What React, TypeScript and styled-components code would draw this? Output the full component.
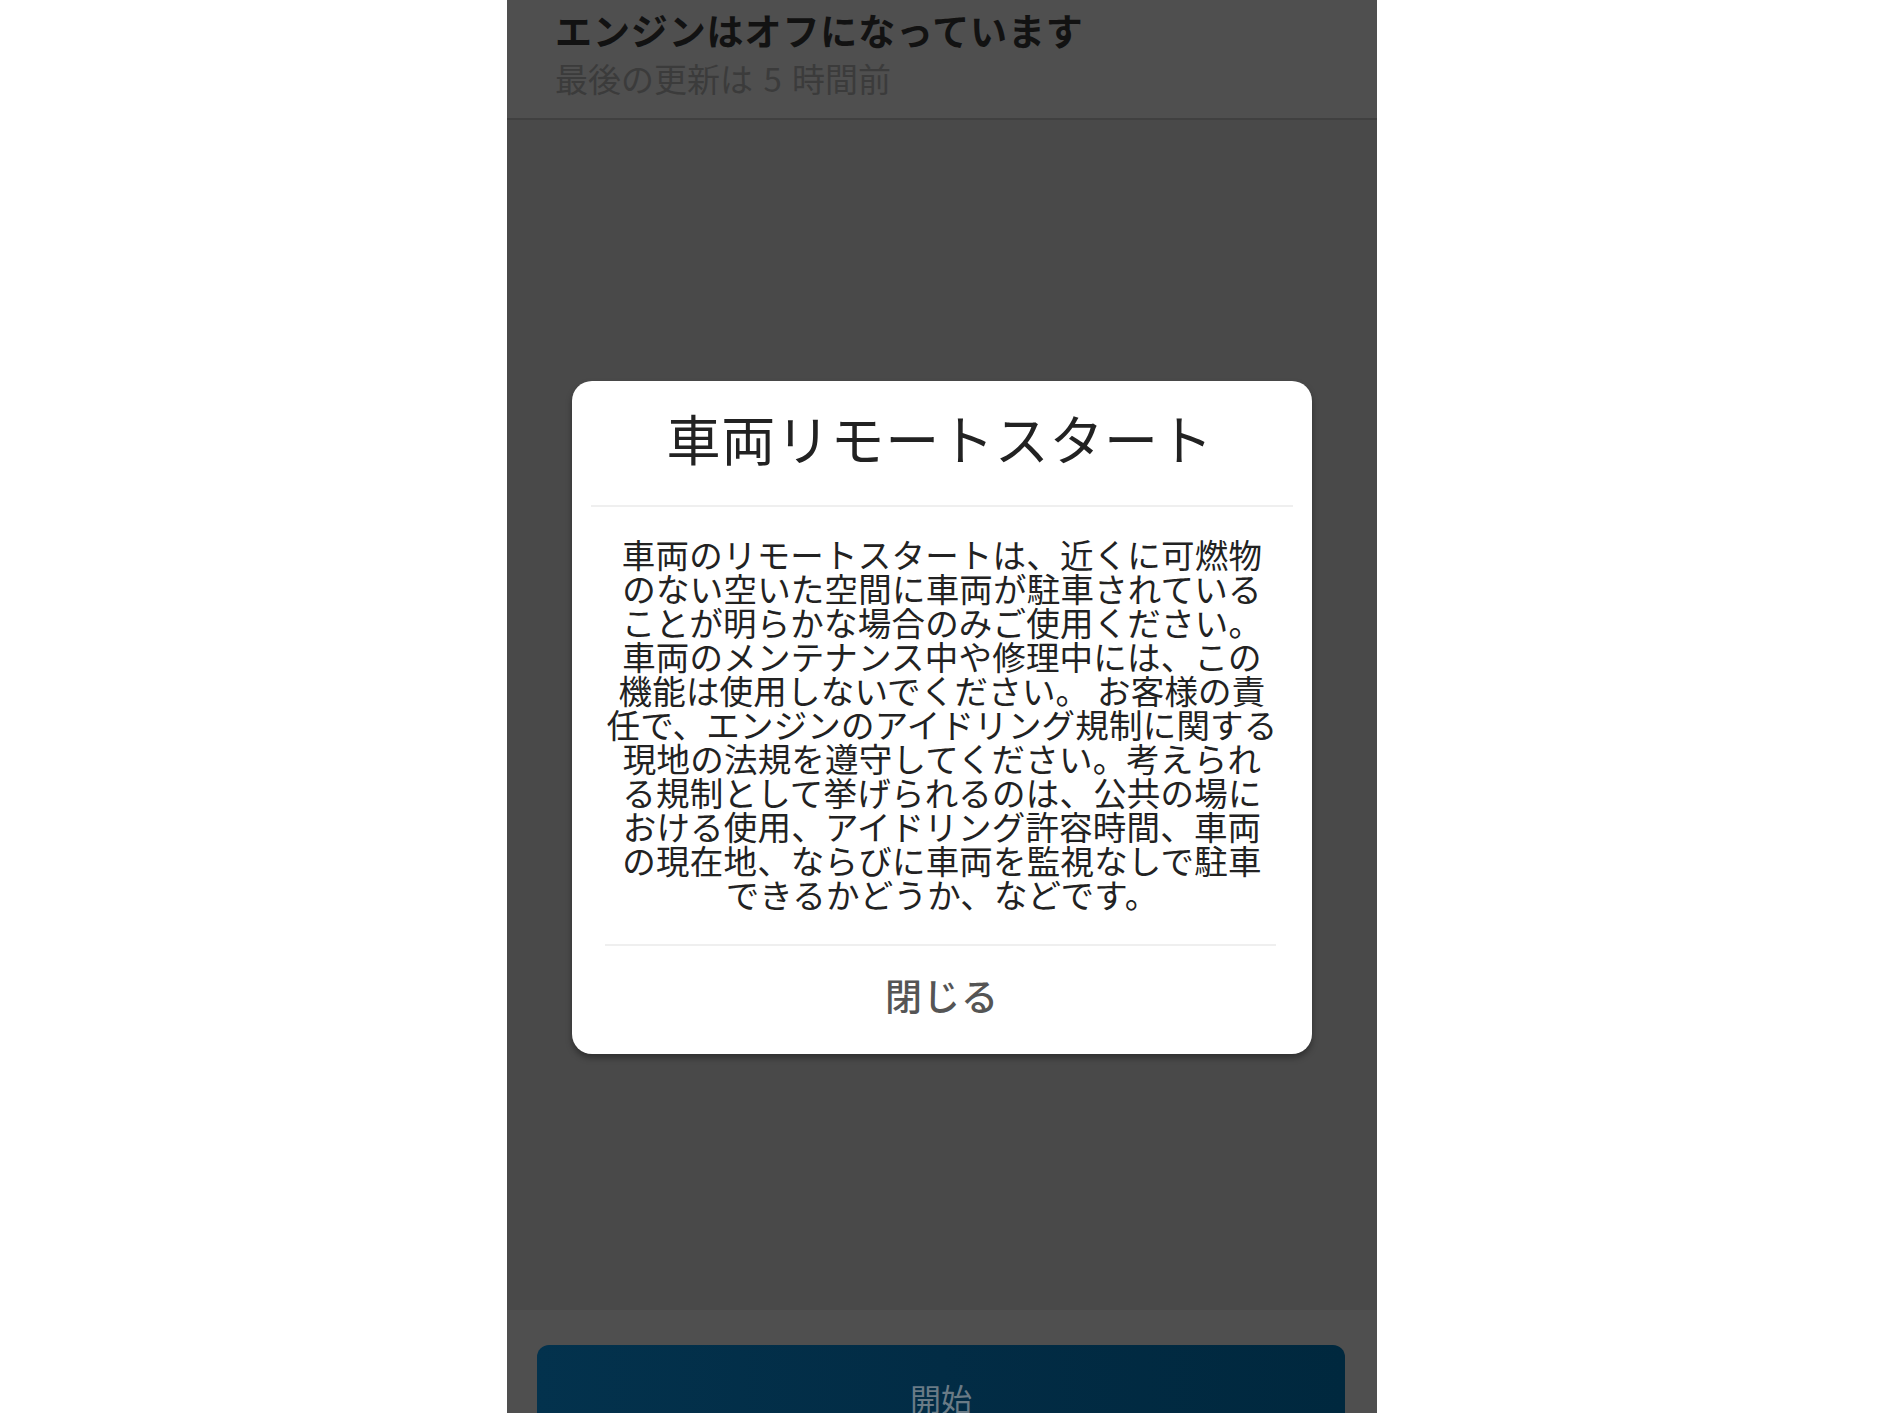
import React from "react";
import styled, { createGlobalStyle } from "styled-components";

const GlobalStyle = createGlobalStyle`
  html, body {
    margin: 0;
    padding: 0;
    background: #ffffff;
  }
  body {
    font-family: "Noto Sans CJK JP", "Noto Sans", sans-serif;
  }
`;

const Page = styled.div`
  width: 1884px;
  height: 1413px;
  display: flex;
  justify-content: flex-start;
  background: #ffffff;
  overflow: hidden;
`;

const Phone = styled.div`
  margin-left: 507px;
  width: 870px;
  height: 1413px;
  display: flex;
  flex-direction: column;
  overflow: hidden;
  background: #494949;
`;

const Header = styled.header`
  height: 120px;
  box-sizing: border-box;
  padding: 8px 0 0 48px;
  background: #4f4f4f;
  border-bottom: 2px solid #404040;
  flex: none;
`;

const HeaderTitle = styled.div`
  font-size: 37px;
  line-height: 44px;
  font-weight: 700;
  color: #121212;
  letter-spacing: 0.9px;
`;

const HeaderSub = styled.div`
  margin-top: 6px;
  font-size: 33px;
  line-height: 40px;
  font-weight: 400;
  color: #3b3b3b;
  word-spacing: 3px;
`;

const Body = styled.main`
  flex: 1;
  display: flex;
  align-items: center;
  justify-content: center;
  padding-top: 5px;
`;

const Modal = styled.div`
  width: 740px;
  background: #ffffff;
  border-radius: 20px;
  box-shadow: 0 4px 6px rgba(0, 0, 0, 0.35);
  display: flex;
  flex-direction: column;
`;

const ModalTitle = styled.h2`
  margin: 0;
  padding: 25px 0 35px;
  text-align: center;
  font-size: 54px;
  line-height: 64px;
  font-weight: 400;
  color: #222222;
  letter-spacing: 0.7px;
  text-indent: -4px;
`;

const Divider = styled.hr<{ $left: number; $right: number }>`
  margin: 0 ${(p) => p.$right}px 0 ${(p) => p.$left}px;
  border: none;
  height: 2px;
  background: #efefef;
`;

const ModalText = styled.div`
  padding: 30px 0 33px;
  text-align: center;
  font-size: 33.5px;
  line-height: 34px;
  color: #222222;
  letter-spacing: 0.2px;
`;

const TextLine = styled.span`
  display: block;
  white-space: pre;
`;

const CloseButton = styled.button`
  height: 108px;
  border: none;
  background: transparent;
  font-family: "Noto Sans CJK JP", "Noto Sans", sans-serif;
  font-size: 37px;
  font-weight: 500;
  color: #555555;
  letter-spacing: 1px;
  display: flex;
  align-items: center;
  justify-content: center;
  padding: 0 0 10px;
  cursor: pointer;
`;

const Footer = styled.footer`
  flex: none;
  height: 103px;
  box-sizing: border-box;
  padding: 35px 32px 0 30px;
  background: #4f4f4f;
`;

const StartButton = styled.button`
  width: 100%;
  height: 104px;
  border: none;
  border-radius: 12px;
  background: linear-gradient(90deg, #03324d 0%, #022c45 50%, #00283e 100%);
  font-family: "Noto Sans CJK JP", "Noto Sans", sans-serif;
  font-size: 31px;
  font-weight: 400;
  color: #6a7b86;
  display: flex;
  align-items: center;
  justify-content: center;
  padding: 0;
`;

const lines = [
  "車両のリモートスタートは、近くに可燃物",
  "のない空いた空間に車両が駐車されている",
  "ことが明らかな場合のみご使用ください。",
  "車両のメンテナンス中や修理中には、この",
  "機能は使用しないでください。 お客様の責",
  "任で、エンジンのアイドリング規制に関する",
  "現地の法規を遵守してください。考えられ",
  "る規制として挙げられるのは、公共の場に",
  "おける使用、アイドリング許容時間、車両",
  "の現在地、ならびに車両を監視なしで駐車",
  "できるかどうか、などです。",
];

export default function App() {
  return (
    <>
      <GlobalStyle />
      <Page>
        <Phone>
          <Header>
            <HeaderTitle>エンジンはオフになっています</HeaderTitle>
            <HeaderSub>最後の更新は 5 時間前</HeaderSub>
          </Header>
          <Body>
            <Modal>
              <ModalTitle>車両リモートスタート</ModalTitle>
              <Divider $left={19} $right={19} />
              <ModalText>
                {lines.map((l, i) => (
                  <TextLine key={i}>{l}</TextLine>
                ))}
              </ModalText>
              <Divider $left={33} $right={36} />
              <CloseButton>閉じる</CloseButton>
            </Modal>
          </Body>
          <Footer>
            <StartButton>開始</StartButton>
          </Footer>
        </Phone>
      </Page>
    </>
  );
}
